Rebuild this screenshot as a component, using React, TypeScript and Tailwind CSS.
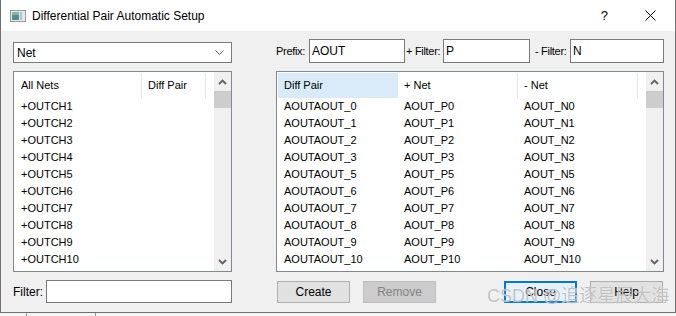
import React from 'react';

const font = "font-['Liberation_Sans',Arial,sans-serif]";

const nets = Array.from({ length: 10 }, (_, i) => `+OUTCH${i + 1}`);
const pairs = [0, 1, 2, 3, 5, 6, 7, 8, 9, 10].map((n) => ({
  pair: `AOUTAOUT_${n}`,
  pos: `AOUT_P${n}`,
  neg: `AOUT_N${n}`,
}));

function Caret({ down }: { down?: boolean }) {
  return (
    <svg width="9" height="6" viewBox="0 0 9 6" className="block">
      <polyline
        points={down ? '1,1 4.5,4.5 8,1' : '1,5 4.5,1.5 8,5'}
        fill="none"
        stroke="#606060"
        strokeWidth="1.8"
      />
    </svg>
  );
}

function ScrollBar() {
  return (
    <div className="w-[17px] shrink-0 bg-[#f0f0f0] flex flex-col">
      <div className="h-[19px] flex items-center justify-center">
        <Caret />
      </div>
      <div className="h-[17px] bg-[#cdcdcd]" />
      <div className="flex-1" />
      <div className="h-[19px] flex items-center justify-center">
        <Caret down />
      </div>
    </div>
  );
}

function Button({
  children,
  disabled,
  focused,
}: {
  children: React.ReactNode;
  disabled?: boolean;
  focused?: boolean;
}) {
  return (
    <div
      className={
        'w-[73px] h-[22px] flex items-center justify-center text-[12px] ' +
        (disabled
          ? 'bg-[#cccccc] border border-[#bfbfbf] text-[#838383]'
          : focused
          ? 'bg-[#e5f1fb] border-2 border-[#0078d7] text-black'
          : 'bg-[#e1e1e1] border border-[#adadad] text-black')
      }
    >
      {children}
    </div>
  );
}

export default function App() {
  return (
    <div className={`w-[676px] h-[316px] bg-[#f4f4f4] relative overflow-hidden ${font}`}>
      <div className="w-[676px] h-[313px] border-l border-r border-b border-[#707070] flex flex-col">
        {/* title bar */}
        <div className="h-[31px] bg-white flex items-center shrink-0">
          <svg width="16" height="12" viewBox="0 0 16 12" className="ml-[9px]">
            <rect x="0.5" y="0.5" width="15" height="11" fill="#e8e8e8" stroke="#9a9a9a" />
            <rect x="2" y="2" width="7" height="8" fill="#4f8f9a" />
            <rect x="2" y="2" width="7" height="3" fill="#7fb6a8" />
            <rect x="10" y="2" width="2" height="8" fill="#a9c4d4" />
          </svg>
          <span className="ml-[6px] text-[12px] text-black">Differential Pair Automatic Setup</span>
          <span className="ml-auto text-[13px] text-black mr-[37px]">?</span>
          <svg width="11" height="11" viewBox="0 0 11 11" className="mr-[19px]">
            <path d="M0.5 0.5 L10.5 10.5 M10.5 0.5 L0.5 10.5" stroke="#000" strokeWidth="1" />
          </svg>
        </div>

        {/* body */}
        <div className="flex-1 bg-[#f0f0f0] flex pl-[12px] text-[11px] text-black">
          {/* left column */}
          <div className="w-[219px] flex flex-col">
            <div className="mt-[11px] h-[21px] bg-white border border-[#7a7a7a] flex items-center pl-[3px] pr-[7px]">
              <span className="text-[12px]">Net</span>
              <svg width="9" height="5" viewBox="0 0 9 5" className="ml-auto">
                <polyline points="0.5,0.5 4.5,4.5 8.5,0.5" fill="none" stroke="#606060" strokeWidth="1" />
              </svg>
            </div>
            <div className="mt-[8px] h-[201px] bg-white border border-[#828790] flex">
              <div className="flex-1 pt-[1px]">
                <div className="h-[25px] flex items-center">
                  <div className="w-[128px] h-full flex items-center pl-[7px] border-r border-[#e5e5e5]">All Nets</div>
                  <div className="w-[64px] h-full flex items-center pl-[6px] border-r border-[#e5e5e5]">Diff Pair</div>
                </div>
                {nets.map((n) => (
                  <div key={n} className="h-[17px] leading-[17px] pl-[7px]">
                    {n}
                  </div>
                ))}
              </div>
              <ScrollBar />
            </div>
            <div className="mt-[8px] flex items-center">
              <span className="text-[12px] w-[33px] shrink-0">Filter:</span>
              <div className="flex-1 h-[23px] bg-white border border-[#7a7a7a]" />
            </div>
          </div>

          {/* right column */}
          <div className="w-[388px] ml-[44px] flex flex-col">
            <div className="mt-[8px] h-[24px] flex items-center text-[11px] tracking-[-0.3px] whitespace-nowrap">
              <span className="w-[33px] shrink-0">Prefix:</span>
              <div className="w-[96px] shrink-0 h-[24px] bg-white border border-[#7a7a7a] pl-[2px] flex items-center text-[12px] tracking-normal">AOUT</div>
              <span className="w-[38px] shrink-0 pl-px">+ Filter:</span>
              <div className="w-[87px] shrink-0 h-[24px] bg-white border border-[#7a7a7a] pl-[2px] flex items-center text-[12px] tracking-normal">P</div>
              <span className="w-[40px] shrink-0 pl-[5px]">- Filter:</span>
              <div className="w-[94px] shrink-0 h-[24px] bg-white border border-[#7a7a7a] pl-[2px] flex items-center text-[12px] tracking-normal">N</div>
            </div>
            <div className="mt-[8px] h-[201px] bg-white border border-[#828790] flex">
              <div className="flex-1 pt-[1px] pl-[1px]">
                <div className="h-[25px] flex items-center">
                  <div className="w-[120px] h-full flex items-center pl-[6px] bg-[#d9ebf9]">Diff Pair</div>
                  <div className="w-[120px] h-full flex items-center pl-[6px] border-r border-[#e5e5e5]">+ Net</div>
                  <div className="w-[120px] h-full flex items-center pl-[6px] border-r border-[#e5e5e5]">- Net</div>
                </div>
                {pairs.map((p) => (
                  <div key={p.pair} className="h-[17px] leading-[17px] flex">
                    <span className="w-[120px] pl-[6px]">{p.pair}</span>
                    <span className="w-[120px] pl-[6px]">{p.pos}</span>
                    <span className="w-[120px] pl-[6px]">{p.neg}</span>
                  </div>
                ))}
              </div>
              <ScrollBar />
            </div>
            <div className="mt-[9px] flex items-center pl-[1px]">
              <Button>Create</Button>
              <div className="ml-[13px]">
                <Button disabled>Remove</Button>
              </div>
              <div className="ml-[68px]">
                <Button focused>Close</Button>
              </div>
              <div className="ml-[13px]">
                <Button>Help</Button>
              </div>
            </div>
          </div>
        </div>
      </div>

      {/* bottom desktop strip */}
      <div className="absolute left-[26px] top-[313px] w-px h-[3px] bg-[#9a9a9a]" />
      <div className="absolute left-[95px] top-[313px] w-px h-[3px] bg-[#9a9a9a]" />

      {/* watermark */}
      <div className="absolute left-[487px] top-[284px] text-[18px] leading-[24px] font-['Liberation_Sans','Noto_Sans_CJK_SC',sans-serif] text-[rgba(175,175,175,0.75)] [text-shadow:0_0_1px_rgba(255,255,255,0.9)] whitespace-nowrap">
        CSDN @追逐星辰大海
      </div>
    </div>
  );
}
